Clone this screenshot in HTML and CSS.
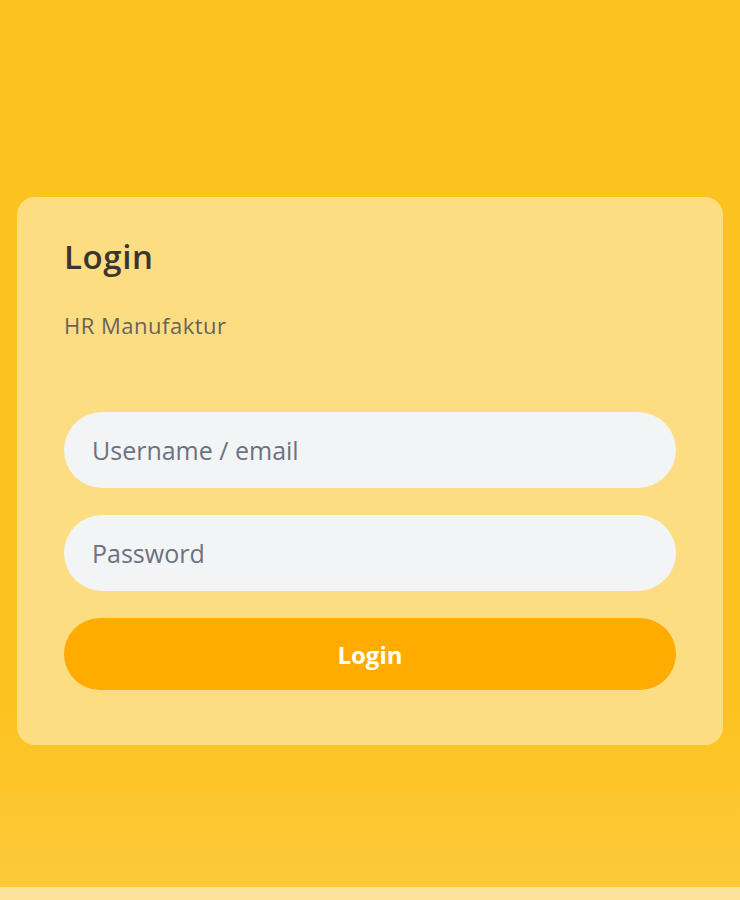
FILE: index.html
```html
<!DOCTYPE html>
<html lang="en">
<head>
    <meta charset="UTF-8">
    <meta name="viewport" content="width=device-width, initial-scale=1.0">
    <title>Login - HR Manufaktur</title>
    <link rel="stylesheet" href="styles.css">
</head>
<body>
    <main class="page">
        <section class="card">
            <h1 class="card-title">Login</h1>
            <p class="card-subtitle">HR Manufaktur</p>

            <form class="login-form">
                <input type="text" class="field" placeholder="Username / email">
                <input type="password" class="field" placeholder="Password">
                <button type="submit" class="btn-login">Login</button>
            </form>
        </section>
    </main>
    <div class="bottom-strip"></div>
</body>
</html>
```

FILE: styles.css
```css
body {
    margin: 0;
    padding: 0;
    font-family: "Open Sans", Lato, sans-serif;
    background: linear-gradient(#fcc21f 0%, #fcc21f 78%, #fdca3c 100%);
}

.page {
    height: 887px;
    box-sizing: border-box;
    padding: 197px 17px 0;
}

.bottom-strip {
    height: 13px;
    background: #fde39a;
}

.card {
    background-color: #fddd82;
    border-radius: 18px;
    padding: 40px 47px 55px;
}

.card-title {
    margin: 0;
    font-size: 33px;
    font-weight: 600;
    letter-spacing: 0.6px;
    color: #3b3530;
    line-height: 40px;
}

.card-subtitle {
    margin: 33px 0 0;
    font-size: 22px;
    letter-spacing: 0.5px;
    color: #67645a;
}

.login-form {
    display: flex;
    flex-direction: column;
    gap: 27px;
    margin-top: 72px;
}

.field {
    height: 76px;
    border: none;
    border-radius: 38px;
    background-color: #f3f4f6;
    padding: 0 28px;
    font-family: inherit;
    font-size: 25px;
    color: #374151;
    outline: none;
}

.field::placeholder {
    color: #6b7280;
}

.btn-login {
    height: 72px;
    border: none;
    border-radius: 36px;
    background-color: #ffab00;
    color: white;
    font-family: inherit;
    font-size: 24px;
    font-weight: 700;
    cursor: pointer;
}
```
